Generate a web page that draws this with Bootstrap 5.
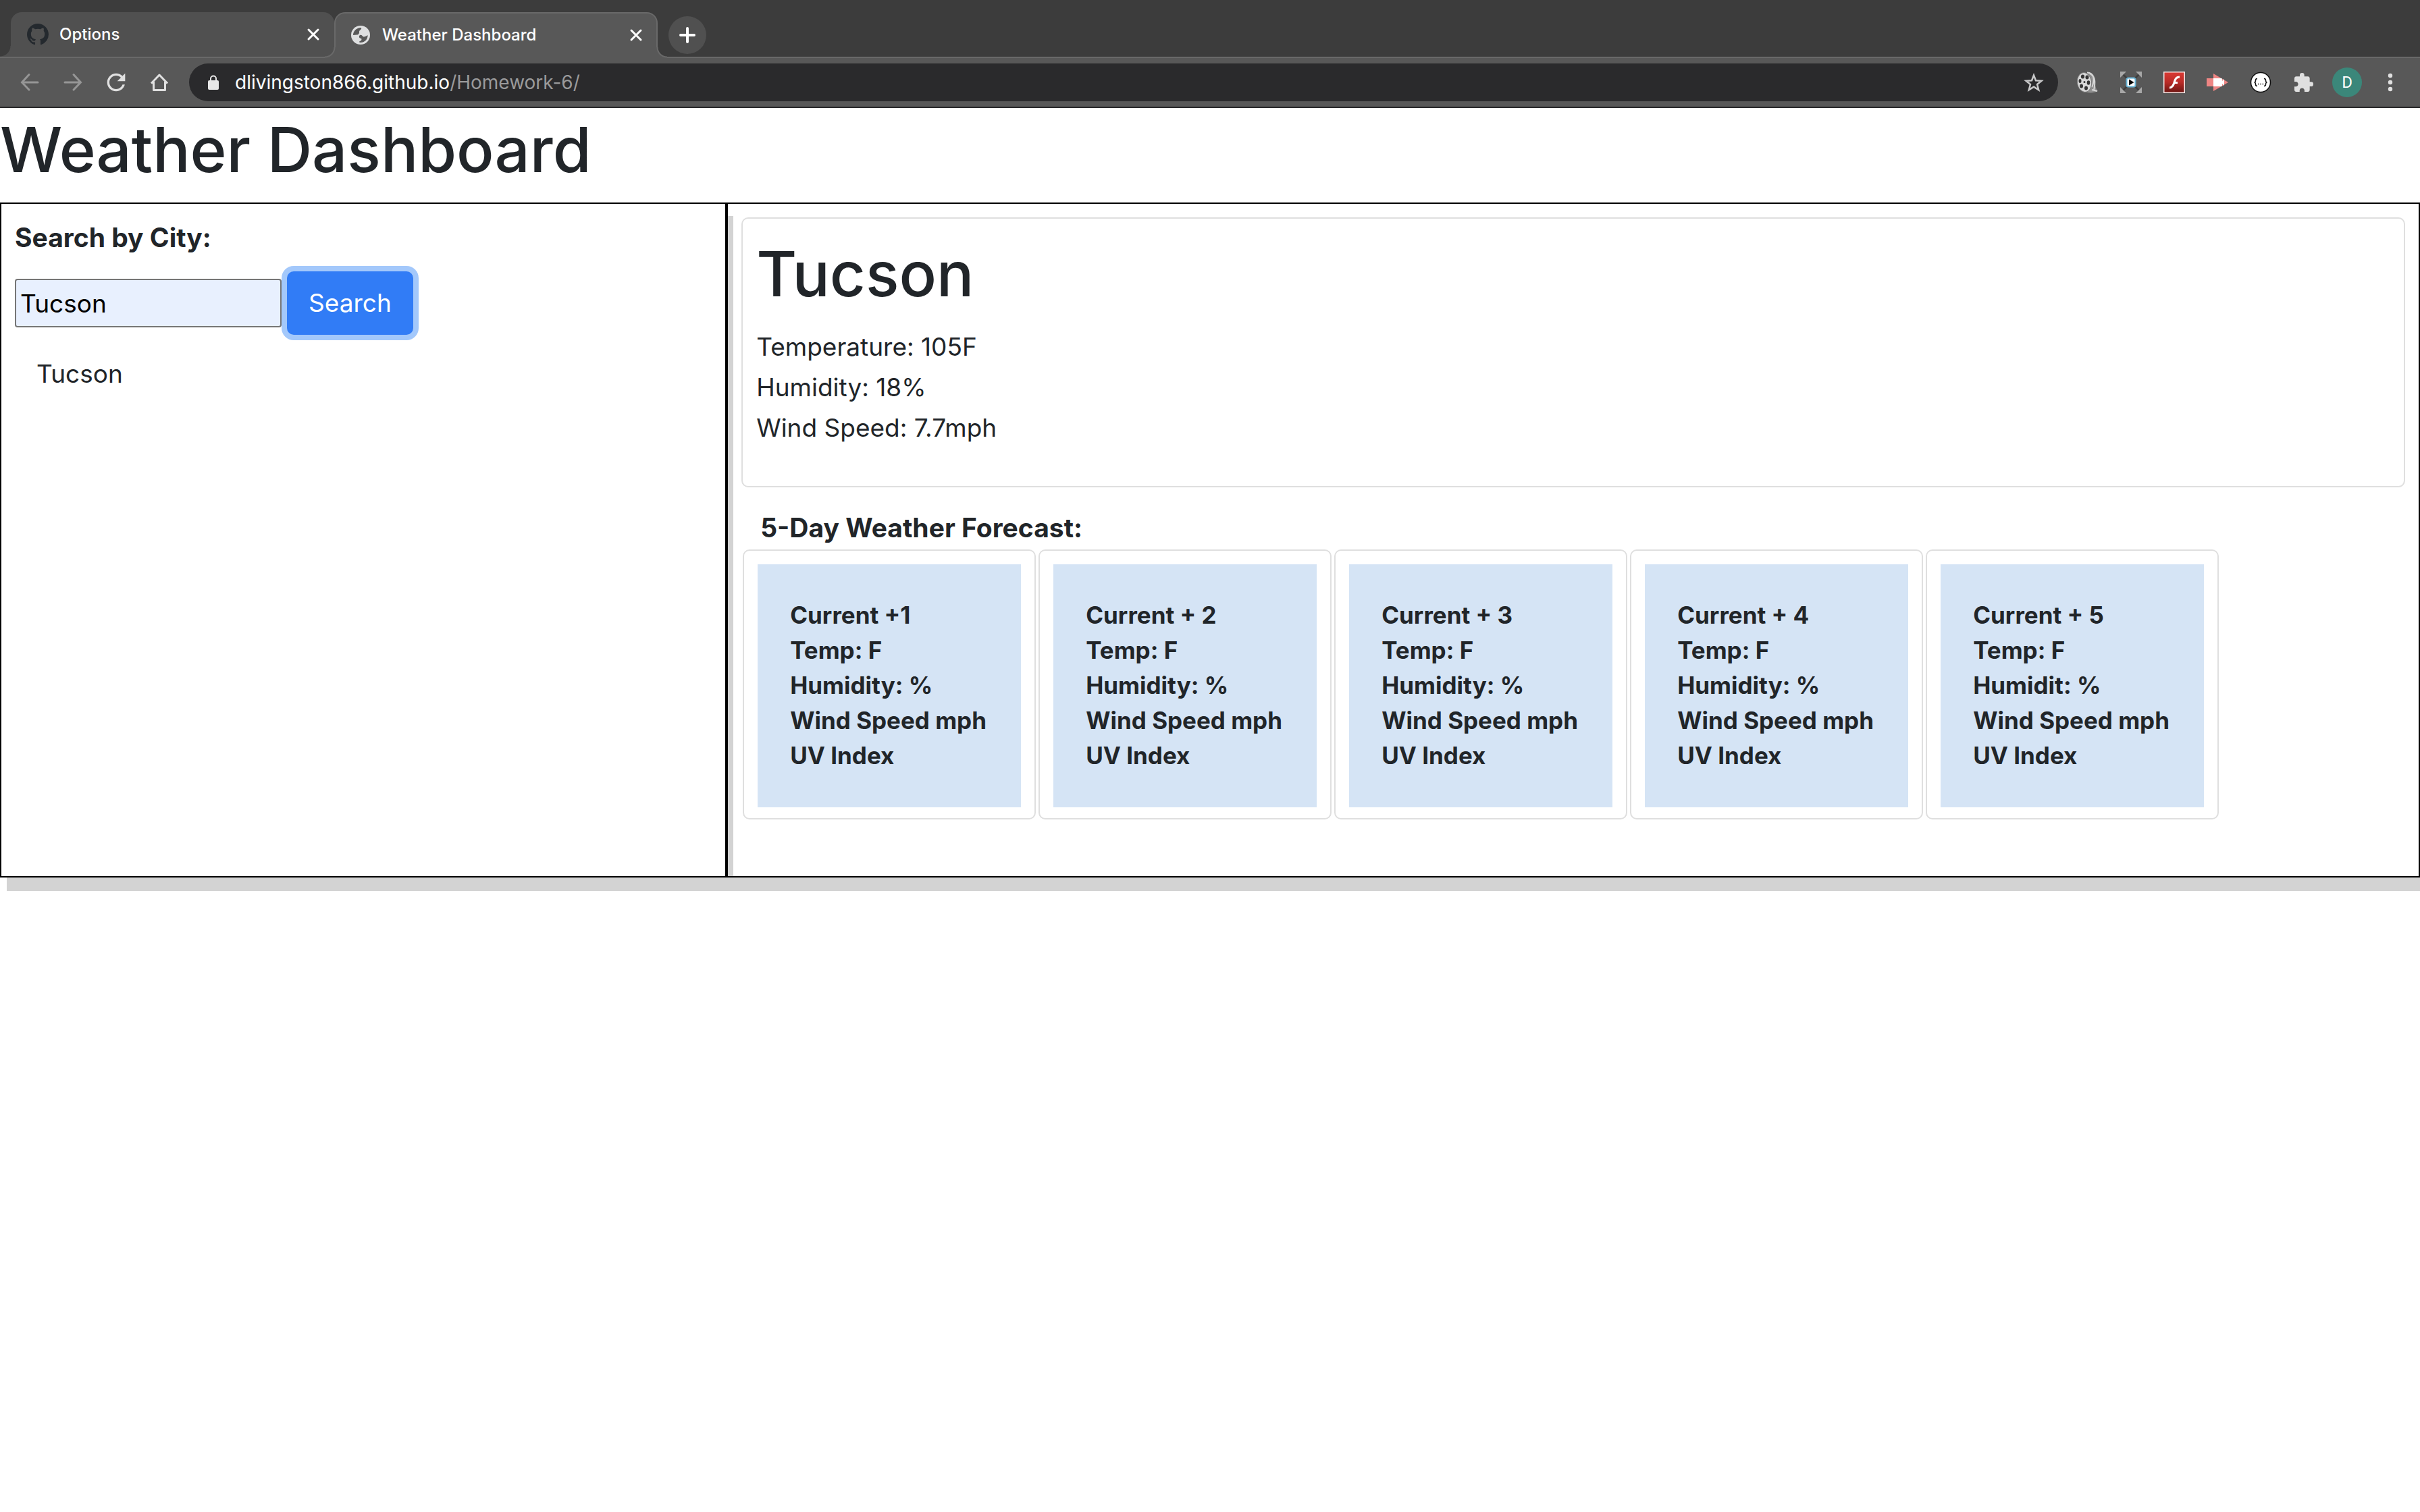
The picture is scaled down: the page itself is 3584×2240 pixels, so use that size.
<!DOCTYPE html>
<html lang="en">
<head>
<meta charset="utf-8">
<meta name="viewport" content="width=device-width, initial-scale=1">
<title>Weather Dashboard</title>
<link href="https://cdn.jsdelivr.net/npm/bootstrap@5.3.0/dist/css/bootstrap.min.css" rel="stylesheet">
<style>
  body { font-family: Inter, "Liberation Sans", sans-serif; font-size: 37px; line-height: 60px; color: #212529; background: #fff; }
  button { font-family: inherit; }
  svg { display: block; flex: none; }

  /* browser window */
  .tab-strip { height: 86px; padding: 18px 0 0 16px; background: #3c3c3c; border-bottom: 2px solid #696969; font-size: 24px; line-height: 32px; font-weight: 500; color: #fff; }
  .win-tab { position: relative; width: 479px; height: 66px; padding: 0 15px 0 24px; gap: 16px; background: #505050; border-radius: 16px 16px 0 0; }
  .win-tab::before { content: ""; position: absolute; left: -16px; bottom: 0; width: 16px; height: 16px; background: radial-gradient(circle at 0 0, transparent 15px, #505050 16px); }
  .win-tab.current { height: 68px; padding: 0 14px 2px 21px; background: #585858; border: 2px solid #696969; border-bottom: 0; }
  .win-tab.current::before, .win-tab.current::after { content: ""; position: absolute; bottom: 0; width: 16px; height: 16px; }
  .win-tab.current::before { left: -16px; background: radial-gradient(circle at 0 0, transparent 13px, #696969 14px 15px, #585858 16px); }
  .win-tab.current::after { right: -16px; background: radial-gradient(circle at 100% 0, transparent 13px, #696969 14px 15px, #585858 16px); }
  .plain-btn { padding: 0; border: 0; background: none; display: flex; align-items: center; justify-content: center; }
  .new-tab { width: 56px; height: 56px; margin: 6px 0 0 16px; border-radius: 50%; background: #505050; }
  .tool-bar { height: 74px; padding: 0 12px; gap: 12px; background: #585858; border-bottom: 2px solid #28282a; }
  .tool-bar .plain-btn { width: 64px; height: 56px; }
  .address { height: 56px; padding: 0 20px 0 24px; gap: 20px; border-radius: 28px; background: #2a2a2c; font-size: 28px; line-height: 56px; color: #fff; }
  .address .path-part { color: #9a9a9b; }
  .address .plain-btn { width: 32px; }
  .avatar { width: 44px; height: 44px; border-radius: 50%; background: #3b877a; color: #fff; font: 24px/44px Roboto, sans-serif; }

  /* dashboard */
  .title-text { font-size: 92px; line-height: 124px; font-weight: 500; margin-bottom: 16px; }
  .sub-title { font-size: 39px; line-height: 60px; font-weight: 700; }
  .board { display: grid; grid-template-columns: calc(30% + 1px) 1fr; min-height: 1000px; }
  .pane { border: 2px solid #000; padding: 20px; box-shadow: 10px 20px #d3d3d3; min-width: 0; }
  .search-pane { padding-right: 0; }
  .city-input { width: 395px; height: 72px; padding: 0 6px; border: 2px solid #767676; border-radius: 4px; background: #e8f0fe; color: #000; line-height: 60px; }
  .search-btn { --bs-btn-bg: #317cf6; --bs-btn-border-color: #317cf6; --bs-btn-font-size: 37px; --bs-btn-line-height: 60px; --bs-btn-padding-x: 30px; --bs-btn-padding-y: 15px; --bs-btn-border-width: 2px; --bs-btn-border-radius: 10px; box-shadow: 0 0 0 8px #a3c8fb; }
  .history { margin: 28px 32px 0; }
  .box-card { border: 2px solid #dfdfdf; border-radius: 10px; padding: 20px; }
  .now-card { min-height: 400px; }
  .forecast-title { margin: 30px 0 2px 28px; }
  .days { gap: 4px; padding-left: 2px; }
  .days .box-card { padding-bottom: 16px; }
  .day-info { width: 390px; padding: 49px 0 51px 48px; background: #d5e4f5; font-size: 35px; line-height: 52px; font-weight: 700; }
</style>
<script src="https://cdn.jsdelivr.net/npm/bootstrap@5.3.0/dist/js/bootstrap.bundle.min.js"></script>
</head>
<body class="min-vh-100">
<header>
  <div class="tab-strip d-flex align-items-start">
    <div class="win-tab d-flex align-items-center">
      <svg width="32" height="32" viewBox="0 0 16 16" fill="#24292e"><path d="M8 0C3.58 0 0 3.58 0 8c0 3.54 2.29 6.53 5.47 7.59.4.07.55-.17.55-.38 0-.19-.01-.82-.01-1.49-2.01.37-2.53-.49-2.69-.94-.09-.23-.48-.94-.82-1.13-.28-.15-.68-.52-.01-.53.63-.01 1.08.58 1.23.82.72 1.21 1.87.87 2.33.66.07-.52.28-.87.51-1.07-1.78-.2-3.64-.89-3.64-3.95 0-.87.31-1.59.82-2.15-.08-.2-.36-1.02.08-2.12 0 0 .67-.21 2.2.82.64-.18 1.32-.27 2-.27.68 0 1.36.09 2 .27 1.53-1.04 2.2-.82 2.2-.82.44 1.1.16 1.92.08 2.12.51.56.82 1.27.82 2.15 0 3.07-1.87 3.75-3.65 3.95.29.25.54.73.54 1.48 0 1.07-.01 1.93-.01 2.2 0 .21.15.46.55.38A8.013 8.013 0 0016 8c0-4.42-3.58-8-8-8z"/></svg>
      <span class="flex-grow-1">Options</span>
      <button class="plain-btn" type="button" aria-label="Close Options"><svg width="32" height="32" viewBox="0 0 32 32" stroke="#fff" stroke-width="3" stroke-linecap="round"><path d="M9 9l14 14M23 9L9 23"/></svg></button>
    </div>
    <div class="win-tab current d-flex align-items-center">
      <svg width="32" height="32" viewBox="0 0 32 32"><circle cx="16" cy="16" r="14" fill="#dedfe0"/><path d="M5 16C5 10 10 5 16.500 5C18 6 17 7 15.500 8.500C13.500 9.500 14 11.500 14 13C12.500 14.500 13 16 10.500 15.500Z M14 17C16 14.500 18 16 19 17.500C20 19.500 24 18 26.500 16C27 21 23 27 16 27C13.500 27 13.500 26 15 25C17.500 24 18 22.500 17 21C14.500 21 13.500 19.500 14 17Z" fill="#585858"/></svg>
      <span class="flex-grow-1">Weather Dashboard</span>
      <button class="plain-btn" type="button" aria-label="Close Weather Dashboard"><svg width="32" height="32" viewBox="0 0 32 32" stroke="#fff" stroke-width="3" stroke-linecap="round"><path d="M9 9l14 14M23 9L9 23"/></svg></button>
    </div>
    <button class="plain-btn new-tab" type="button" aria-label="New tab"><svg width="32" height="32" viewBox="0 0 32 32" stroke="#fff" stroke-width="4" stroke-linecap="round"><path d="M16 6v20M6 16h20"/></svg></button>
  </div>
  <nav class="tool-bar d-flex align-items-center">
    <div class="d-flex">
      <button class="plain-btn" type="button" aria-label="Back"><svg width="32" height="32" viewBox="0 0 32 32" fill="none" stroke="#969696" stroke-width="3" stroke-linecap="round"><path d="M28 16H4.500M15 4.500L4.500 16L15 27"/></svg></button>
      <button class="plain-btn" type="button" aria-label="Forward"><svg width="32" height="32" viewBox="0 0 32 32" fill="none" stroke="#969696" stroke-width="3" stroke-linecap="round"><path d="M4 16H27.500M17 4.500L27.500 16L17 27"/></svg></button>
      <button class="plain-btn" type="button" aria-label="Reload"><svg width="40" height="40" viewBox="0 0 24 24" fill="#e0e0e0"><path d="M17.650 6.350C16.200 4.900 14.210 4 12 4c-4.420 0-7.990 3.580-7.990 8s3.570 8 7.990 8c3.730 0 6.840-2.550 7.730-6h-2.080c-.82 2.330-3.040 4-5.650 4-3.310 0-6-2.690-6-6s2.690-6 6-6c1.660 0 3.140.69 4.220 1.780L13 11h7V4l-2.350 2.350z"/></svg></button>
      <button class="plain-btn" type="button" aria-label="Home"><svg width="32" height="32" viewBox="0 0 32 32" fill="none" stroke="#e0e0e0" stroke-width="3"><path d="M4 17.500L16 5L28 17.500M7.500 15V27.500H24.500V15" stroke-linejoin="round"/></svg></button>
    </div>
    <div class="address d-flex align-items-center flex-grow-1">
      <svg width="24" height="24" viewBox="0 0 24 24"><rect x="4" y="9" width="16" height="14" rx="2" fill="#e8e8e8"/><path d="M8 10V6.500a4 4 0 0 1 8 0V10" fill="none" stroke="#e8e8e8" stroke-width="2"/></svg>
      <div class="flex-grow-1" role="textbox" aria-label="Address"><span>dlivingston866.github.io</span><span class="path-part">/Homework-6/</span></div>
      <button class="plain-btn" type="button" aria-label="Bookmark this page"><svg width="32" height="32" viewBox="0 0 32 32"><path d="M16 5.500l3 7.700 8.500.5-6.500 5.300 2.200 8.200L16 22.600l-7.200 4.600L11 19l-6.500-5.300 8.500-.5z" fill="none" stroke="#c9c9ca" stroke-width="2.500"/></svg></button>
    </div>
    <div class="d-flex">
      <button class="plain-btn" type="button" aria-label="Video downloader"><svg width="32" height="32" viewBox="0 0 32 32"><path d="M16 1C25 1 28 9 27 17C27 23 29 27 31 29C25 32 17 32 12 30Z" fill="#8f8f8f"/><path d="M15 1.500C25 2 27 12 22 23M19 3C28 8 27 17 25 28M22 27l8 2" fill="none" stroke="#d6d6d6" stroke-width="2"/><ellipse cx="11" cy="16" rx="10.500" ry="14.500" transform="rotate(-8 11 16)" fill="#d8d8d8" stroke="#777" stroke-width="1"/><g fill="#333"><ellipse cx="8.500" cy="7.500" rx="2.600" ry="3"/><ellipse cx="15" cy="8.500" rx="2.500" ry="3"/><ellipse cx="4.500" cy="14" rx="2" ry="3"/><ellipse cx="17" cy="16.500" rx="2.300" ry="3.200"/><ellipse cx="6.500" cy="21.500" rx="2.500" ry="3"/><ellipse cx="13.500" cy="24.500" rx="2.500" ry="3"/><circle cx="11" cy="15.500" r="1.500"/></g></svg></button>
      <button class="plain-btn" type="button" aria-label="Full screen video"><svg width="32" height="32" viewBox="0 0 32 32"><path d="M4 4l24 24M28 4L4 28" stroke="#3f3f3f" stroke-width="2.500"/><path d="M0 0H9L0 9zM32 0V9L23 0zM0 32V23L9 32zM32 32H23L32 23z" fill="#a8a8a8"/><rect x="9.500" y="9.500" width="13" height="13" rx="2.500" fill="#fff" stroke="#67b2d4" stroke-width="2"/><path d="M13 11.500L20.500 16L13 20.500z" fill="#000"/></svg></button>
      <button class="plain-btn" type="button" aria-label="Flash"><svg width="32" height="32" viewBox="0 0 32 32"><defs><linearGradient id="flashRed" x1="0" y1="0" x2="0" y2="1"><stop offset="0" stop-color="#d93a34"/><stop offset=".5" stop-color="#b92b27"/><stop offset="1" stop-color="#701613"/></linearGradient></defs><rect width="32" height="32" fill="#f4e6e4"/><rect x="1.500" y="1.500" width="29" height="29" fill="url(#flashRed)"/><path d="M24 8C18 8 17 13 16 16.500C14.500 21 13 24 9 24M14.500 16.500H21" fill="none" stroke="#fff" stroke-width="3.200"/></svg></button>
      <button class="plain-btn" type="button" aria-label="Screen recorder"><svg width="32" height="32" viewBox="0 0 32 32"><path d="M0 10H10V3L32 16L10 29V22H0z" fill="#ee8583"/><path d="M10 10H22Q23 10 23 11.500V14L26 11V21L23 18V20.500Q23 22 22 22H10z" fill="#fff"/></svg></button>
      <button class="plain-btn" type="button" aria-label="JSON viewer"><svg width="32" height="32" viewBox="0 0 32 32"><circle cx="16" cy="16" r="14.500" fill="#fff" stroke="#111" stroke-width="1.500"/><path d="M11 10.500Q8.500 10.500 8.500 13Q8.500 16 6.500 16Q8.500 16 8.500 19Q8.500 21.500 11 21.500M21 10.500Q23.500 10.500 23.500 13Q23.500 16 25.500 16Q23.500 16 23.500 19Q23.500 21.500 21 21.500" fill="none" stroke="#111" stroke-width="1.500"/><path d="M12 18.500h1.500M15.300 18.500h1.500M18.600 18.500h1.500" stroke="#111" stroke-width="1.500"/></svg></button>
      <button class="plain-btn" type="button" aria-label="Extensions"><svg width="32" height="32" viewBox="0.500 -0.500 24 24" fill="#e0e0e0"><path d="M20.500 11H19V7c0-1.100-.9-2-2-2h-4V3.500a2.500 2.500 0 0 0-5 0V5H4c-1.100 0-1.990.9-1.990 2v3.800H3.500c1.490 0 2.700 1.210 2.700 2.700s-1.210 2.700-2.700 2.700H2V20c0 1.100.9 2 2 2h3.800v-1.500c0-1.490 1.210-2.700 2.700-2.700s2.700 1.210 2.700 2.700V22H17c1.100 0 2-.9 2-2v-4h1.500a2.500 2.500 0 0 0 0-5z"/></svg></button>
      <button class="plain-btn" type="button" aria-label="Profile"><span class="avatar">D</span></button>
      <button class="plain-btn" type="button" aria-label="Menu"><svg width="32" height="32" viewBox="0 0 32 32" fill="#e0e0e0"><circle cx="16" cy="6" r="3.200"/><circle cx="16" cy="16" r="3.200"/><circle cx="16" cy="26" r="3.200"/></svg></button>
    </div>
  </nav>
</header>

<main>
  <h1 class="title-text">Weather Dashboard</h1>
  <div class="board">
    <section class="pane search-pane">
      <form>
        <label class="sub-title d-block mb-0" for="city">Search by City:</label>
        <div class="d-flex align-items-center mt-3 pt-1">
          <input class="city-input me-2" id="city" type="text" value="Tucson">
          <button class="btn btn-primary search-btn" type="button">Search</button>
        </div>
      </form>
      <ul class="list-unstyled history">
        <li>Tucson</li>
      </ul>
    </section>
    <section class="pane">
      <article class="box-card now-card">
        <h2 class="title-text">Tucson</h2>
        <p class="m-0">Temperature: 105F</p>
        <p class="m-0">Humidity: 18%</p>
        <p class="m-0">Wind Speed: 7.7mph</p>
      </article>
      <h3 class="sub-title forecast-title">5-Day Weather Forecast:</h3>
      <div class="days d-flex flex-wrap">
        <div class="box-card"><div class="day-info"><div>Current +1</div><div>Temp: F</div><div>Humidity: %</div><div>Wind Speed mph</div><div>UV Index</div></div></div>
        <div class="box-card"><div class="day-info"><div>Current + 2</div><div>Temp: F</div><div>Humidity: %</div><div>Wind Speed mph</div><div>UV Index</div></div></div>
        <div class="box-card"><div class="day-info"><div>Current + 3</div><div>Temp: F</div><div>Humidity: %</div><div>Wind Speed mph</div><div>UV Index</div></div></div>
        <div class="box-card"><div class="day-info"><div>Current + 4</div><div>Temp: F</div><div>Humidity: %</div><div>Wind Speed mph</div><div>UV Index</div></div></div>
        <div class="box-card"><div class="day-info"><div>Current + 5</div><div>Temp: F</div><div>Humidit: %</div><div>Wind Speed mph</div><div>UV Index</div></div></div>
      </div>
    </section>
  </div>
</main>
</body>
</html>
